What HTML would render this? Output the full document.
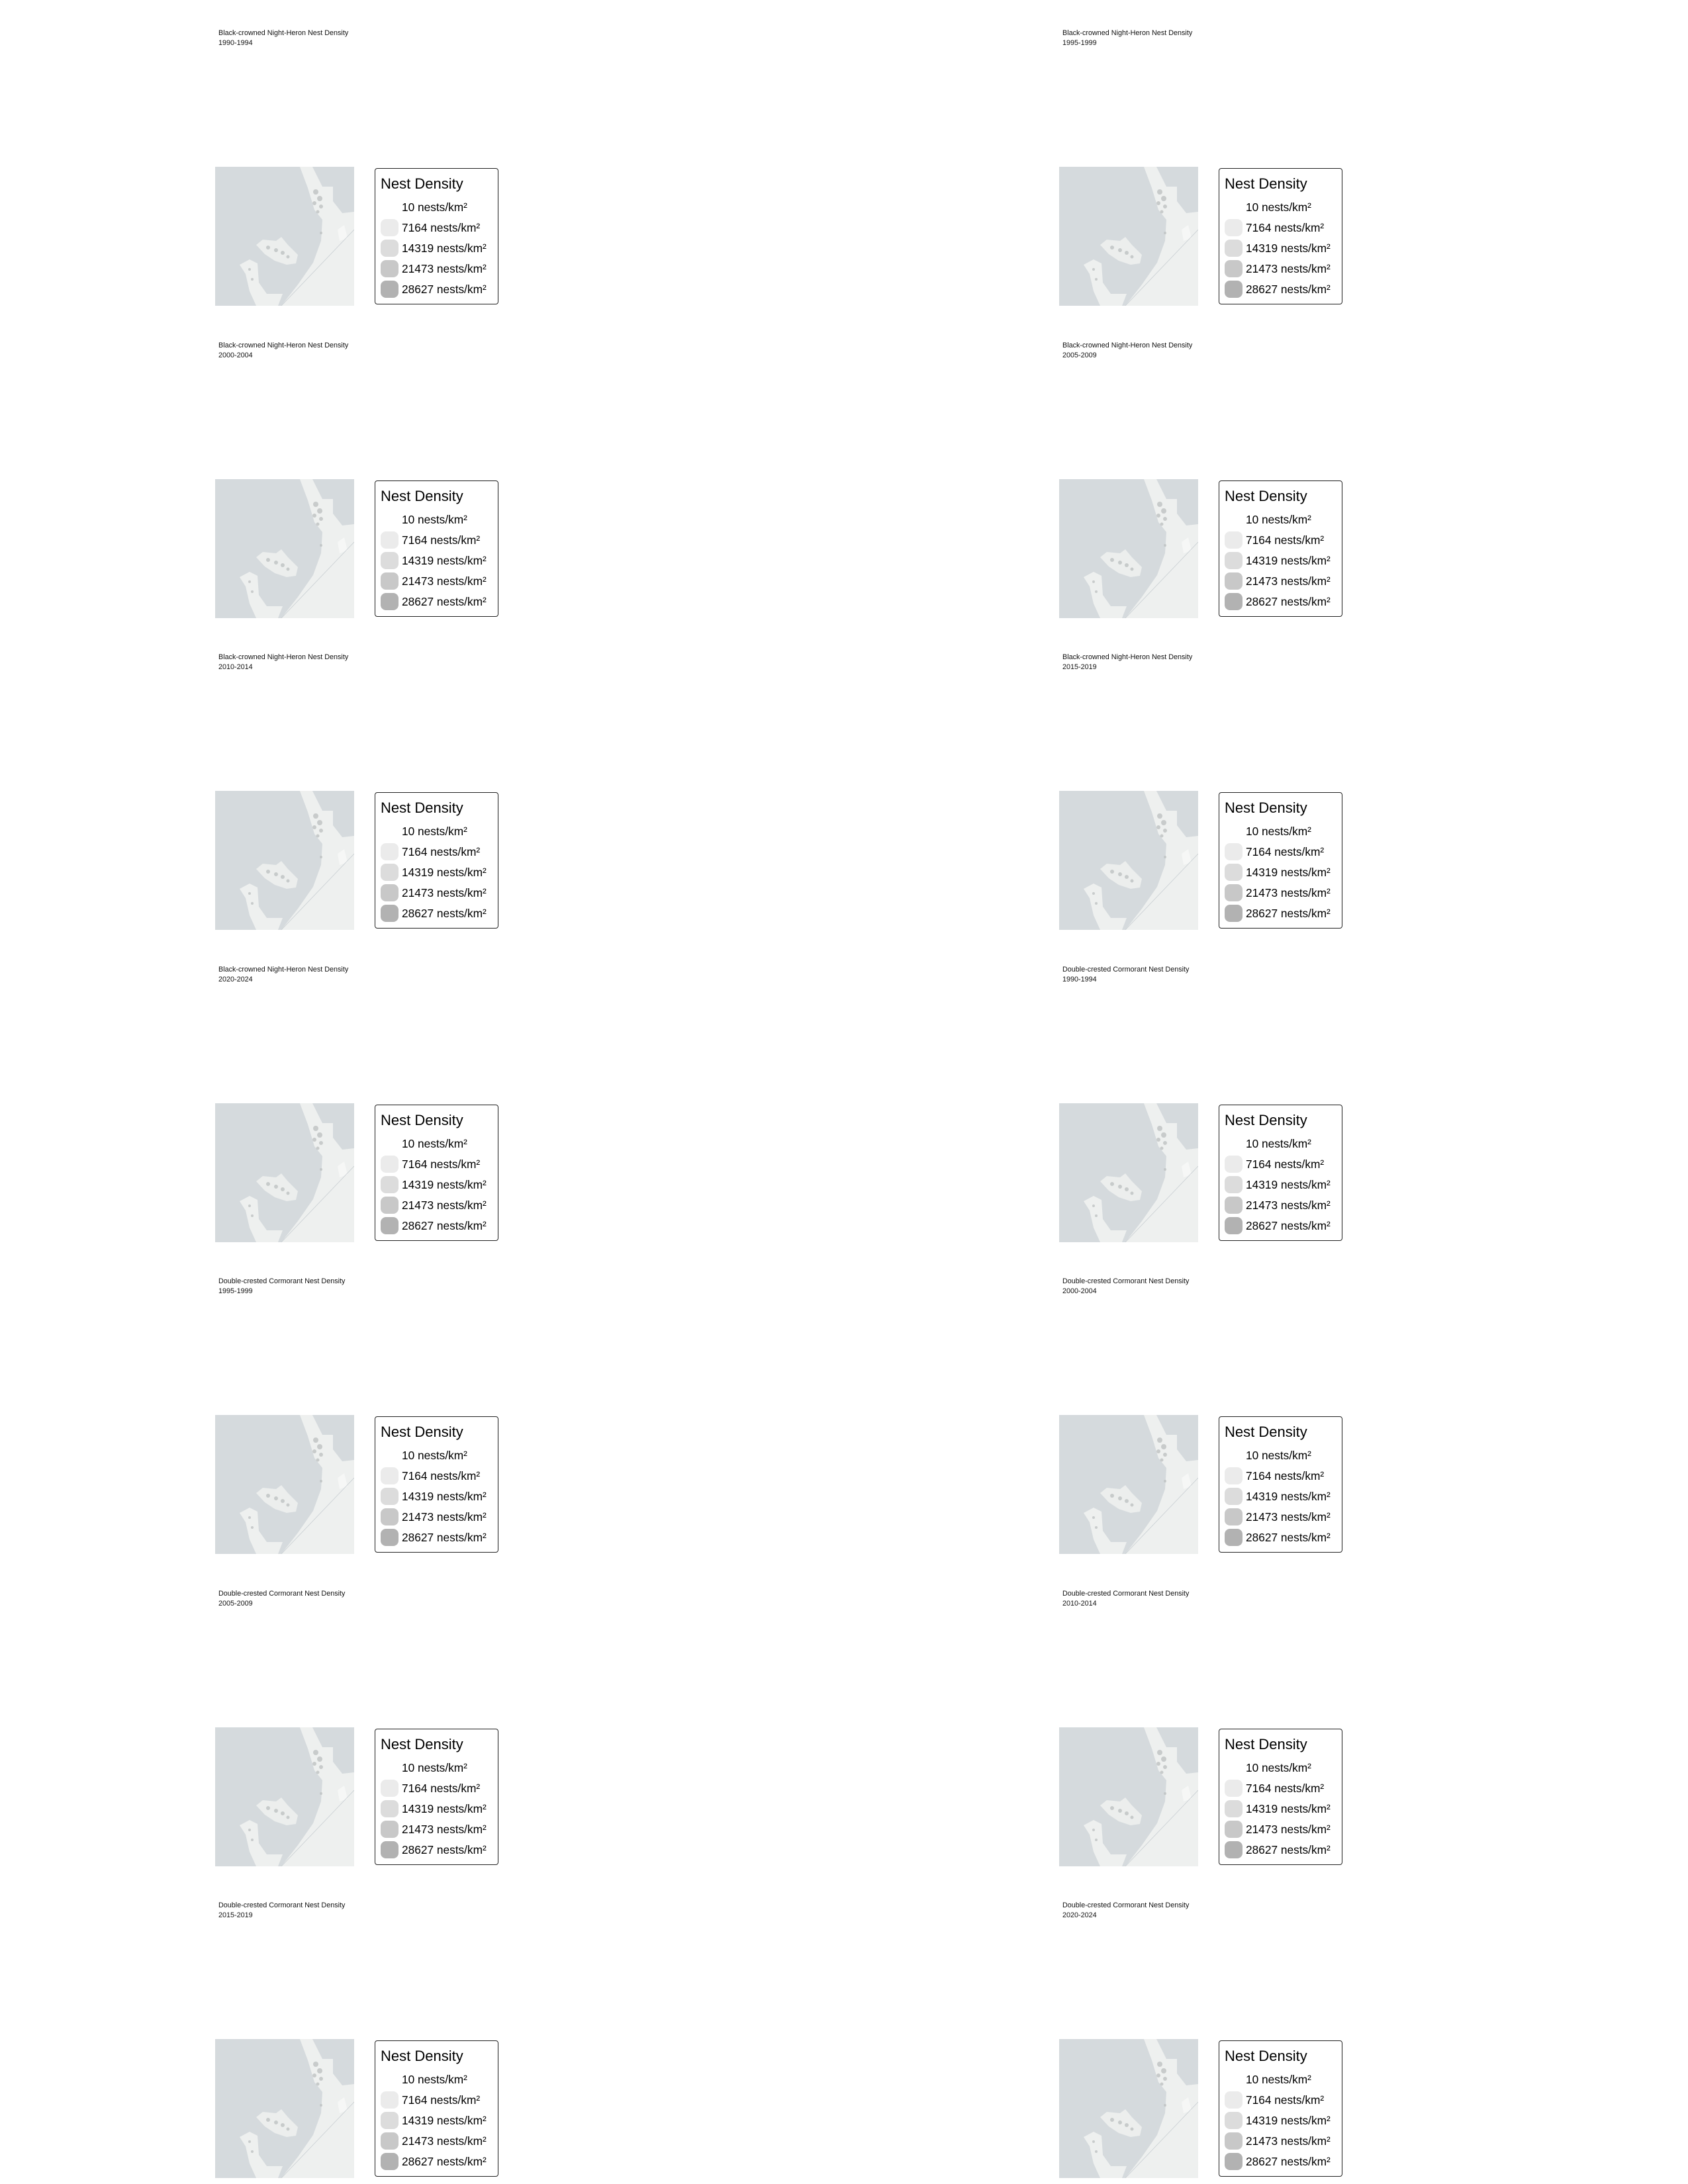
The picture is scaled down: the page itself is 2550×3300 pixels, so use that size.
<!DOCTYPE html>
<html><head><meta charset="utf-8"><style>
html,body{margin:0;padding:0;background:#fff;}
body{width:2550px;height:3300px;position:relative;overflow:hidden;font-family:"Liberation Sans",Arial,sans-serif;color:#000;}
.p{position:absolute;width:440px;height:470px;}
.t{position:absolute;left:5px;top:43px;font-size:10.8px;line-height:15px;white-space:nowrap;color:#111;}
.m{position:absolute;left:0;top:252px;width:210px;height:210px;}
.l{position:absolute;left:241px;top:254px;width:185px;height:204px;border:1.5px solid #222;border-radius:4px;background:#fff;}
.lt{position:absolute;left:8px;top:10px;font-size:22px;white-space:nowrap;}
.r{position:absolute;left:8px;width:27px;height:26px;border-radius:8px;}
.rt{position:absolute;left:40px;font-size:17.3px;white-space:nowrap;line-height:20px;}
</style></head><body>
<svg width="0" height="0" style="position:absolute">
<defs>
<g id="map">
<rect width="210" height="210" fill="#d5dadd"/>
<path d="M128,0 L147,0 L162,30 L178,30 L178,52 L192,70 L210,68 L210,210 L100,210 L125,178 L148,145 L160,112 L162,80 L150,65 L140,32 Z" fill="#eef0ef"/>
<path d="M62,118 L72,110 L92,112 L100,106 L110,118 L125,133 L122,146 L108,148 L90,142 L75,132 Z" fill="#eceeed"/>
<path d="M37,148 L52,140 L64,146 L66,175 L78,192 L102,192 L95,210 L62,210 L52,188 L46,162 Z" fill="#eef0ef"/>
<path d="M185,95 L195,88 L200,108 L188,112 Z" fill="#f6f7f6"/>
<line x1="100" y1="210" x2="210" y2="95" stroke="#c8ced2" stroke-width="0.8"/>
<g fill="#bfc3c3" opacity="0.8">
<circle cx="152" cy="38" r="4"/><circle cx="158" cy="48" r="4"/><circle cx="150" cy="55" r="3"/><circle cx="160" cy="60" r="3"/><circle cx="155" cy="68" r="2.5"/>
<circle cx="160" cy="100" r="2"/><circle cx="80" cy="122" r="3"/><circle cx="92" cy="126" r="3"/><circle cx="102" cy="130" r="3"/><circle cx="110" cy="136" r="2.5"/>
<circle cx="52" cy="155" r="2"/><circle cx="56" cy="170" r="2"/>
</g>
</g>
</defs></svg>

<div class="p" style="left:325px;top:0px"><div class="t">Black-crowned Night-Heron Nest Density<br>1990-1994</div><svg class="m" viewBox="0 0 210 210"><use href="#map"/></svg><div class="l"><div class="lt">Nest Density</div><div class="rt" style="top:48px">10 nests/km²</div><div class="r" style="top:76px;background:#ebebeb"></div><div class="rt" style="top:79px">7164 nests/km²</div><div class="r" style="top:107px;background:#dcdcdc"></div><div class="rt" style="top:110px">14319 nests/km²</div><div class="r" style="top:138px;background:#c8c8c8"></div><div class="rt" style="top:141px">21473 nests/km²</div><div class="r" style="top:169px;background:#b2b2b2"></div><div class="rt" style="top:172px">28627 nests/km²</div></div></div>
<div class="p" style="left:1600px;top:0px"><div class="t">Black-crowned Night-Heron Nest Density<br>1995-1999</div><svg class="m" viewBox="0 0 210 210"><use href="#map"/></svg><div class="l"><div class="lt">Nest Density</div><div class="rt" style="top:48px">10 nests/km²</div><div class="r" style="top:76px;background:#ebebeb"></div><div class="rt" style="top:79px">7164 nests/km²</div><div class="r" style="top:107px;background:#dcdcdc"></div><div class="rt" style="top:110px">14319 nests/km²</div><div class="r" style="top:138px;background:#c8c8c8"></div><div class="rt" style="top:141px">21473 nests/km²</div><div class="r" style="top:169px;background:#b2b2b2"></div><div class="rt" style="top:172px">28627 nests/km²</div></div></div>
<div class="p" style="left:325px;top:471.5px"><div class="t">Black-crowned Night-Heron Nest Density<br>2000-2004</div><svg class="m" viewBox="0 0 210 210"><use href="#map"/></svg><div class="l"><div class="lt">Nest Density</div><div class="rt" style="top:48px">10 nests/km²</div><div class="r" style="top:76px;background:#ebebeb"></div><div class="rt" style="top:79px">7164 nests/km²</div><div class="r" style="top:107px;background:#dcdcdc"></div><div class="rt" style="top:110px">14319 nests/km²</div><div class="r" style="top:138px;background:#c8c8c8"></div><div class="rt" style="top:141px">21473 nests/km²</div><div class="r" style="top:169px;background:#b2b2b2"></div><div class="rt" style="top:172px">28627 nests/km²</div></div></div>
<div class="p" style="left:1600px;top:471.5px"><div class="t">Black-crowned Night-Heron Nest Density<br>2005-2009</div><svg class="m" viewBox="0 0 210 210"><use href="#map"/></svg><div class="l"><div class="lt">Nest Density</div><div class="rt" style="top:48px">10 nests/km²</div><div class="r" style="top:76px;background:#ebebeb"></div><div class="rt" style="top:79px">7164 nests/km²</div><div class="r" style="top:107px;background:#dcdcdc"></div><div class="rt" style="top:110px">14319 nests/km²</div><div class="r" style="top:138px;background:#c8c8c8"></div><div class="rt" style="top:141px">21473 nests/km²</div><div class="r" style="top:169px;background:#b2b2b2"></div><div class="rt" style="top:172px">28627 nests/km²</div></div></div>
<div class="p" style="left:325px;top:943px"><div class="t">Black-crowned Night-Heron Nest Density<br>2010-2014</div><svg class="m" viewBox="0 0 210 210"><use href="#map"/></svg><div class="l"><div class="lt">Nest Density</div><div class="rt" style="top:48px">10 nests/km²</div><div class="r" style="top:76px;background:#ebebeb"></div><div class="rt" style="top:79px">7164 nests/km²</div><div class="r" style="top:107px;background:#dcdcdc"></div><div class="rt" style="top:110px">14319 nests/km²</div><div class="r" style="top:138px;background:#c8c8c8"></div><div class="rt" style="top:141px">21473 nests/km²</div><div class="r" style="top:169px;background:#b2b2b2"></div><div class="rt" style="top:172px">28627 nests/km²</div></div></div>
<div class="p" style="left:1600px;top:943px"><div class="t">Black-crowned Night-Heron Nest Density<br>2015-2019</div><svg class="m" viewBox="0 0 210 210"><use href="#map"/></svg><div class="l"><div class="lt">Nest Density</div><div class="rt" style="top:48px">10 nests/km²</div><div class="r" style="top:76px;background:#ebebeb"></div><div class="rt" style="top:79px">7164 nests/km²</div><div class="r" style="top:107px;background:#dcdcdc"></div><div class="rt" style="top:110px">14319 nests/km²</div><div class="r" style="top:138px;background:#c8c8c8"></div><div class="rt" style="top:141px">21473 nests/km²</div><div class="r" style="top:169px;background:#b2b2b2"></div><div class="rt" style="top:172px">28627 nests/km²</div></div></div>
<div class="p" style="left:325px;top:1414.5px"><div class="t">Black-crowned Night-Heron Nest Density<br>2020-2024</div><svg class="m" viewBox="0 0 210 210"><use href="#map"/></svg><div class="l"><div class="lt">Nest Density</div><div class="rt" style="top:48px">10 nests/km²</div><div class="r" style="top:76px;background:#ebebeb"></div><div class="rt" style="top:79px">7164 nests/km²</div><div class="r" style="top:107px;background:#dcdcdc"></div><div class="rt" style="top:110px">14319 nests/km²</div><div class="r" style="top:138px;background:#c8c8c8"></div><div class="rt" style="top:141px">21473 nests/km²</div><div class="r" style="top:169px;background:#b2b2b2"></div><div class="rt" style="top:172px">28627 nests/km²</div></div></div>
<div class="p" style="left:1600px;top:1414.5px"><div class="t">Double-crested Cormorant Nest Density<br>1990-1994</div><svg class="m" viewBox="0 0 210 210"><use href="#map"/></svg><div class="l"><div class="lt">Nest Density</div><div class="rt" style="top:48px">10 nests/km²</div><div class="r" style="top:76px;background:#ebebeb"></div><div class="rt" style="top:79px">7164 nests/km²</div><div class="r" style="top:107px;background:#dcdcdc"></div><div class="rt" style="top:110px">14319 nests/km²</div><div class="r" style="top:138px;background:#c8c8c8"></div><div class="rt" style="top:141px">21473 nests/km²</div><div class="r" style="top:169px;background:#b2b2b2"></div><div class="rt" style="top:172px">28627 nests/km²</div></div></div>
<div class="p" style="left:325px;top:1886px"><div class="t">Double-crested Cormorant Nest Density<br>1995-1999</div><svg class="m" viewBox="0 0 210 210"><use href="#map"/></svg><div class="l"><div class="lt">Nest Density</div><div class="rt" style="top:48px">10 nests/km²</div><div class="r" style="top:76px;background:#ebebeb"></div><div class="rt" style="top:79px">7164 nests/km²</div><div class="r" style="top:107px;background:#dcdcdc"></div><div class="rt" style="top:110px">14319 nests/km²</div><div class="r" style="top:138px;background:#c8c8c8"></div><div class="rt" style="top:141px">21473 nests/km²</div><div class="r" style="top:169px;background:#b2b2b2"></div><div class="rt" style="top:172px">28627 nests/km²</div></div></div>
<div class="p" style="left:1600px;top:1886px"><div class="t">Double-crested Cormorant Nest Density<br>2000-2004</div><svg class="m" viewBox="0 0 210 210"><use href="#map"/></svg><div class="l"><div class="lt">Nest Density</div><div class="rt" style="top:48px">10 nests/km²</div><div class="r" style="top:76px;background:#ebebeb"></div><div class="rt" style="top:79px">7164 nests/km²</div><div class="r" style="top:107px;background:#dcdcdc"></div><div class="rt" style="top:110px">14319 nests/km²</div><div class="r" style="top:138px;background:#c8c8c8"></div><div class="rt" style="top:141px">21473 nests/km²</div><div class="r" style="top:169px;background:#b2b2b2"></div><div class="rt" style="top:172px">28627 nests/km²</div></div></div>
<div class="p" style="left:325px;top:2357.5px"><div class="t">Double-crested Cormorant Nest Density<br>2005-2009</div><svg class="m" viewBox="0 0 210 210"><use href="#map"/></svg><div class="l"><div class="lt">Nest Density</div><div class="rt" style="top:48px">10 nests/km²</div><div class="r" style="top:76px;background:#ebebeb"></div><div class="rt" style="top:79px">7164 nests/km²</div><div class="r" style="top:107px;background:#dcdcdc"></div><div class="rt" style="top:110px">14319 nests/km²</div><div class="r" style="top:138px;background:#c8c8c8"></div><div class="rt" style="top:141px">21473 nests/km²</div><div class="r" style="top:169px;background:#b2b2b2"></div><div class="rt" style="top:172px">28627 nests/km²</div></div></div>
<div class="p" style="left:1600px;top:2357.5px"><div class="t">Double-crested Cormorant Nest Density<br>2010-2014</div><svg class="m" viewBox="0 0 210 210"><use href="#map"/></svg><div class="l"><div class="lt">Nest Density</div><div class="rt" style="top:48px">10 nests/km²</div><div class="r" style="top:76px;background:#ebebeb"></div><div class="rt" style="top:79px">7164 nests/km²</div><div class="r" style="top:107px;background:#dcdcdc"></div><div class="rt" style="top:110px">14319 nests/km²</div><div class="r" style="top:138px;background:#c8c8c8"></div><div class="rt" style="top:141px">21473 nests/km²</div><div class="r" style="top:169px;background:#b2b2b2"></div><div class="rt" style="top:172px">28627 nests/km²</div></div></div>
<div class="p" style="left:325px;top:2829px"><div class="t">Double-crested Cormorant Nest Density<br>2015-2019</div><svg class="m" viewBox="0 0 210 210"><use href="#map"/></svg><div class="l"><div class="lt">Nest Density</div><div class="rt" style="top:48px">10 nests/km²</div><div class="r" style="top:76px;background:#ebebeb"></div><div class="rt" style="top:79px">7164 nests/km²</div><div class="r" style="top:107px;background:#dcdcdc"></div><div class="rt" style="top:110px">14319 nests/km²</div><div class="r" style="top:138px;background:#c8c8c8"></div><div class="rt" style="top:141px">21473 nests/km²</div><div class="r" style="top:169px;background:#b2b2b2"></div><div class="rt" style="top:172px">28627 nests/km²</div></div></div>
<div class="p" style="left:1600px;top:2829px"><div class="t">Double-crested Cormorant Nest Density<br>2020-2024</div><svg class="m" viewBox="0 0 210 210"><use href="#map"/></svg><div class="l"><div class="lt">Nest Density</div><div class="rt" style="top:48px">10 nests/km²</div><div class="r" style="top:76px;background:#ebebeb"></div><div class="rt" style="top:79px">7164 nests/km²</div><div class="r" style="top:107px;background:#dcdcdc"></div><div class="rt" style="top:110px">14319 nests/km²</div><div class="r" style="top:138px;background:#c8c8c8"></div><div class="rt" style="top:141px">21473 nests/km²</div><div class="r" style="top:169px;background:#b2b2b2"></div><div class="rt" style="top:172px">28627 nests/km²</div></div></div>
</body></html>
